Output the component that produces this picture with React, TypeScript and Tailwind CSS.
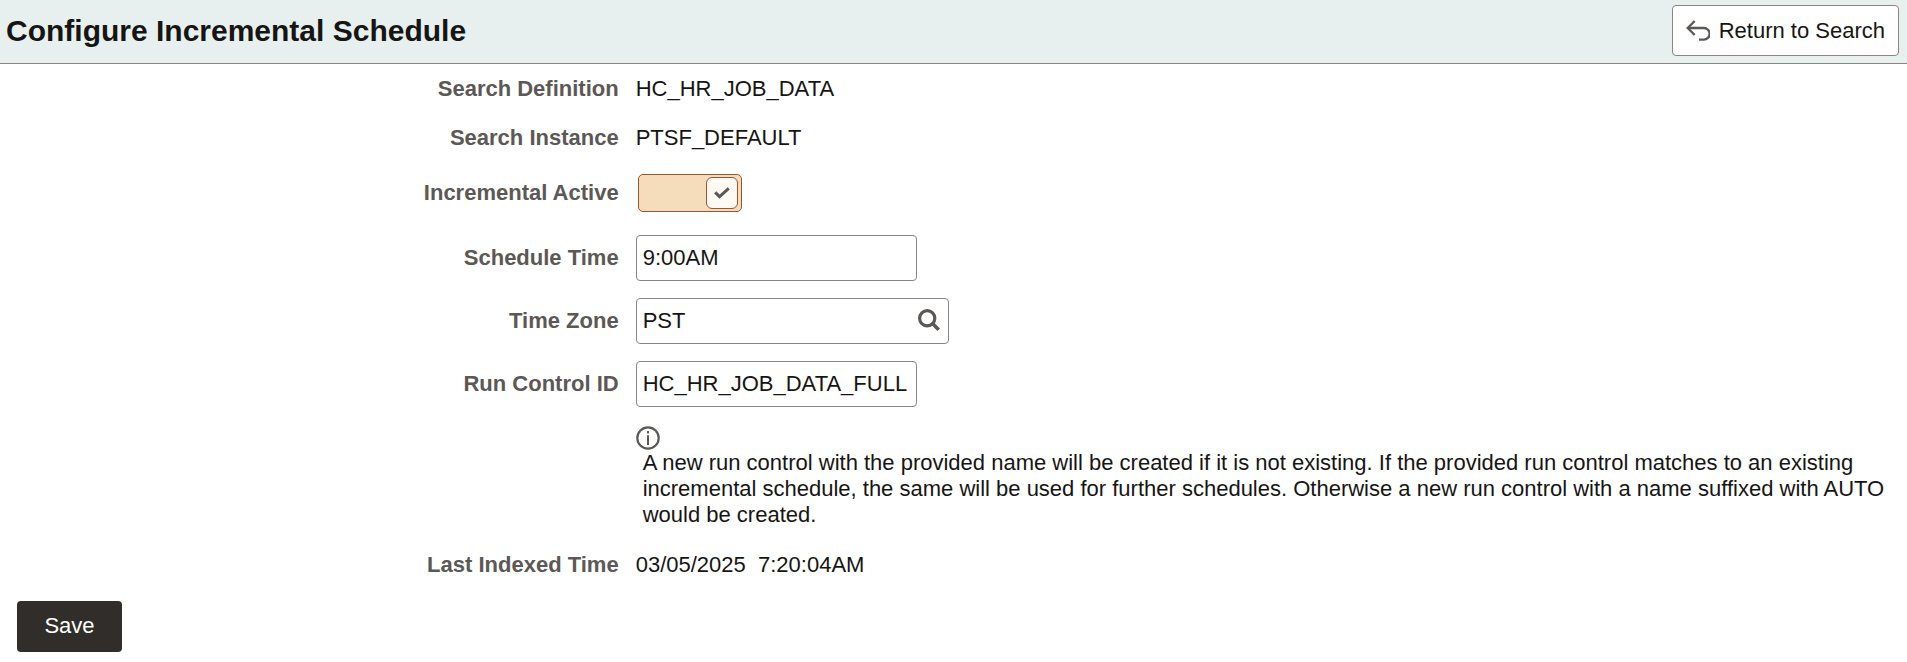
import { useState } from "react";
import type { ReactNode } from "react";

function ReturnIcon() {
  return (
    <svg aria-hidden="true" width="24" height="22" viewBox="0 0 24 22" fill="none" stroke="#5b5856" strokeWidth="2.3">
      <path d="M8.7 1 1.7 8l7 7" />
      <path d="M2 8h15.8a5.8 5.8 0 0 1 0 11.6H13" />
    </svg>
  );
}

function SearchIcon() {
  return (
    <svg aria-hidden="true" width="22" height="22" viewBox="0 0 22 22" fill="none" stroke="#5b5856">
      <circle cx="9.2" cy="9.2" r="7.6" strokeWidth="3.2" />
      <path d="m14.3 14.3 6.4 6.4" strokeWidth="3.6" />
    </svg>
  );
}

function InfoIcon() {
  return (
    <svg role="img" aria-label="Information" className="block" width="24" height="24" viewBox="0 0 24 24">
      <circle cx="12" cy="12" r="10.7" fill="none" stroke="#5b5856" strokeWidth="2.2" />
      <path d="M11 5h2v2.4h-2zM11 9.3h2V19h-2z" fill="#5b5856" />
    </svg>
  );
}

function CheckIcon() {
  return (
    <svg aria-hidden="true" width="16" height="12" viewBox="0 0 16 12" fill="none" stroke="#5b5856" strokeWidth="3">
      <path d="m1.2 5.4 4.3 4.2L14.8 1.4" />
    </svg>
  );
}

function Row({ label, htmlFor, children }: { label: string; htmlFor?: string; children: ReactNode }) {
  const style = "w-1/3 shrink-0 pr-[17px] text-right font-bold text-[#5b5856]";
  return (
    <div className="flex items-center">
      {htmlFor ? (
        <label htmlFor={htmlFor} className={style}>{label}</label>
      ) : (
        <span className={style}>{label}</span>
      )}
      <div className="min-w-0 flex-1">{children}</div>
    </div>
  );
}

const field = "h-[46px] rounded-[4px] border border-[#8b8580] bg-white pl-[6px] text-[#161513]";

export default function App() {
  const [active, setActive] = useState(true);
  return (
    <div className="bg-white font-['Liberation_Sans',Arial,sans-serif] text-[22px] leading-[26px] text-[#161513]">
      <header className="flex h-16 items-center justify-between border-b border-[#8b8580] bg-[#e7f0ef] pr-2 pb-[2px] pl-[6px]">
        <h1 className="text-[30px] leading-9 font-bold">Configure Incremental Schedule</h1>
        <button type="button" className="flex h-[51px] items-center gap-[9px] rounded-[4px] border border-[#8b8580] bg-white px-[13px]">
          <ReturnIcon />
          Return to Search
        </button>
      </header>
      <main className="pt-3">
        <div className="flex flex-col gap-[23px]">
          <Row label="Search Definition">HC_HR_JOB_DATA</Row>
          <Row label="Search Instance">PTSF_DEFAULT</Row>
          <Row label="Incremental Active" htmlFor="active">
            <label className="ml-[2px] flex h-[38px] w-[104px] cursor-pointer items-center rounded-[5px] border border-[#9e5333] bg-[#f5dcba] px-[3px]">
              <input
                id="active"
                type="checkbox"
                role="switch"
                checked={active}
                onChange={(e) => setActive(e.target.checked)}
                className="peer sr-only"
              />
              <span className="flex h-8 w-8 items-center justify-center rounded-[6px] border border-[#9e5333] bg-[#fff9f4] peer-checked:ml-auto">
                {active && <CheckIcon />}
              </span>
            </label>
          </Row>
        </div>
        <div className="mt-[23px] flex flex-col gap-[17px]">
          <Row label="Schedule Time" htmlFor="time">
            <input id="time" type="text" defaultValue="9:00AM" className={`${field} block w-[281px]`} />
          </Row>
          <Row label="Time Zone" htmlFor="zone">
            <div className={`${field} flex w-[313px] items-center pr-2`}>
              <input id="zone" type="text" defaultValue="PST" className="min-w-0 flex-1 outline-none" />
              <button type="button" aria-label="Look up time zone" className="pb-[2px]">
                <SearchIcon />
              </button>
            </div>
          </Row>
          <Row label="Run Control ID" htmlFor="run">
            <input id="run" type="text" defaultValue="HC_HR_JOB_DATA_FULL" className={`${field} block w-[281px]`} />
          </Row>
        </div>
        <div className="mt-[19px] mb-6 ml-[33.3333%] pr-4">
          <InfoIcon />
          <p className="pl-[7px]">
            A new run control with the provided name will be created if it is not existing. If the provided run control
            matches to an existing incremental schedule, the same will be used for further schedules. Otherwise a new
            run control with a name suffixed with AUTO would be created.
          </p>
        </div>
        <Row label="Last Indexed Time">
          <span className="whitespace-pre">03/05/2025  7:20:04AM</span>
        </Row>
        <button type="button" className="mt-[23px] ml-[17px] block h-[51px] w-[105px] rounded-[4px] bg-[#312d2a] pb-[2px] text-white">
          Save
        </button>
      </main>
    </div>
  );
}
